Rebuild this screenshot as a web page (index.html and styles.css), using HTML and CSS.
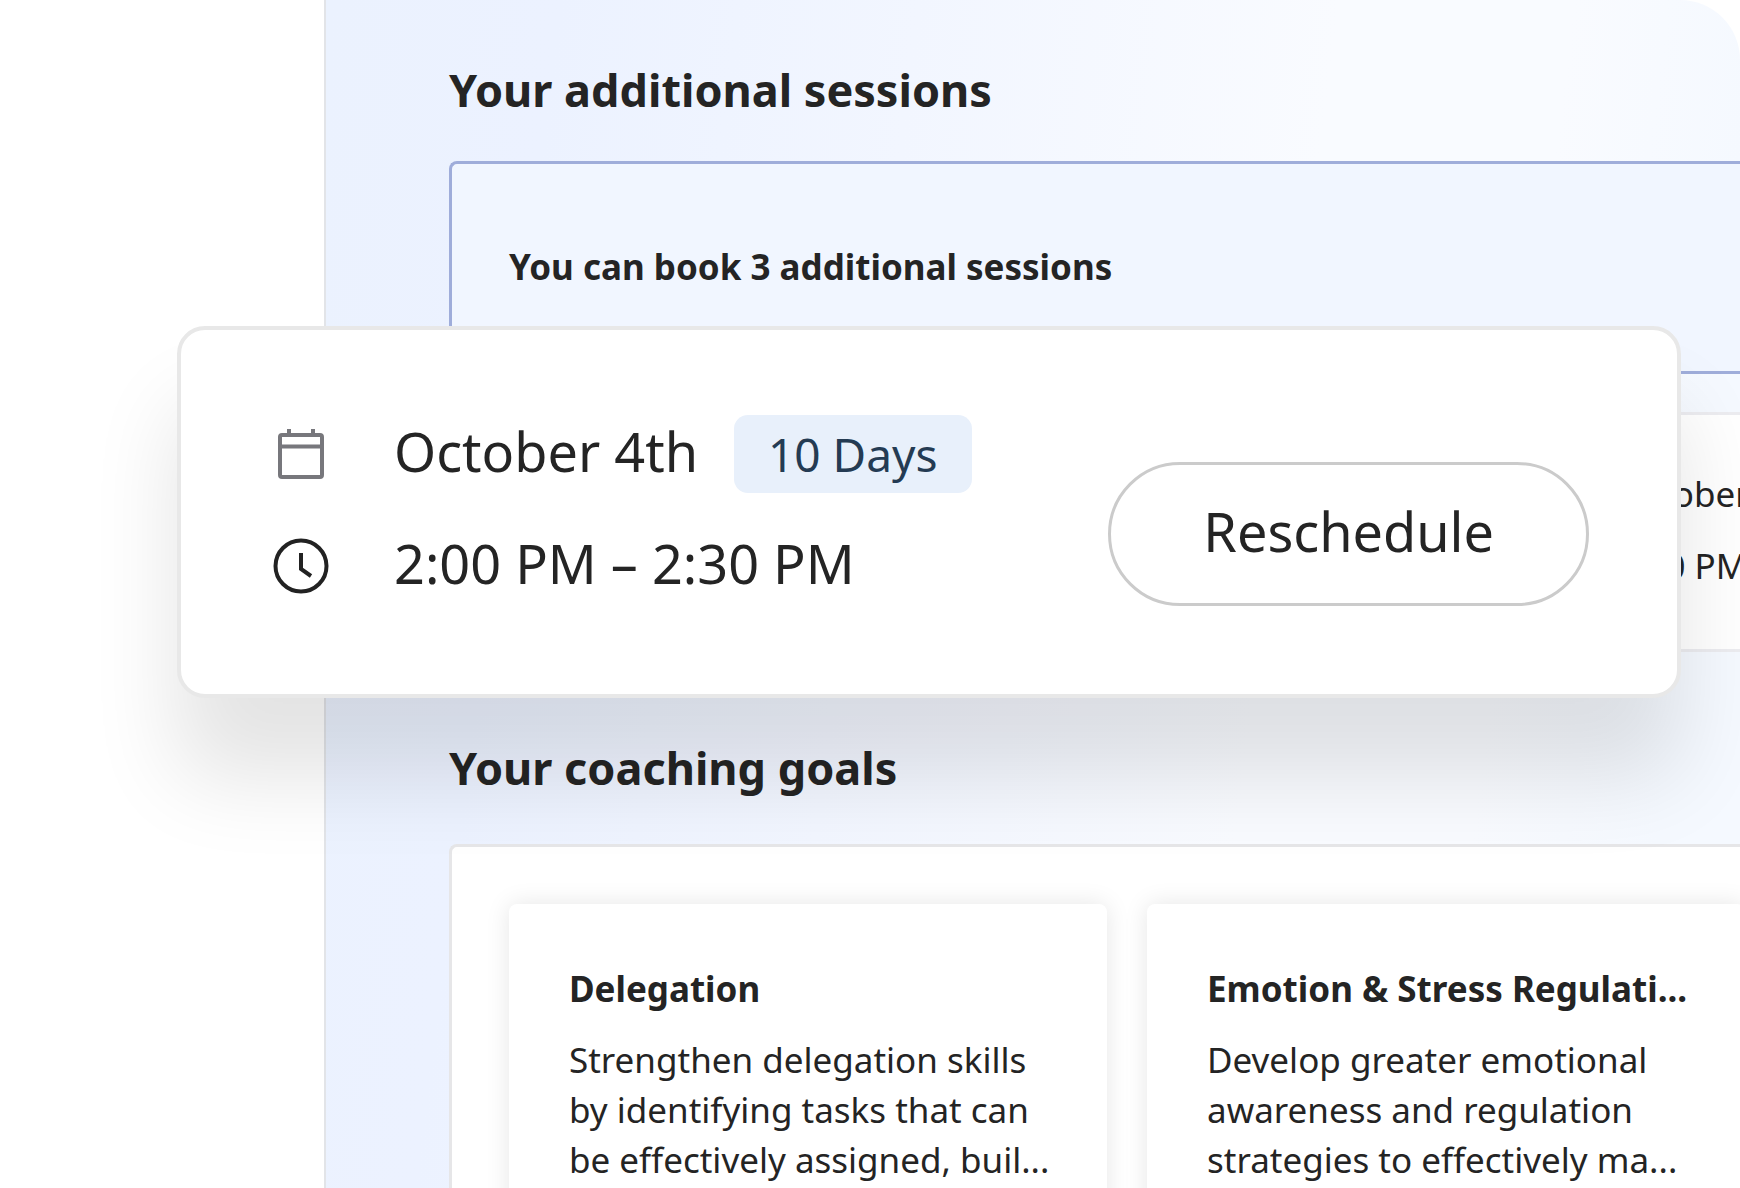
FILE: index.html
```html
<!DOCTYPE html>
<html lang="en">
<head>
<meta charset="utf-8">
<meta name="viewport" content="width=device-width, initial-scale=1">
<title>Coaching sessions</title>
<link rel="stylesheet" href="styles.css">
</head>
<body>
<main class="panel">
  <section class="sessions">
    <h2 class="section-title">Your additional sessions</h2>
    <div class="notice"><p class="notice-text">You can book 3 additional sessions</p></div>
    <div class="session">
      <p class="session-line">October 4th</p>
      <p class="session-line">2:00 PM – 2:30 PM</p>
    </div>
  </section>
  <section class="goals">
    <h2 class="section-title">Your coaching goals</h2>
    <div class="goal-list">
      <article class="goal">
        <h3 class="goal-title">Delegation</h3>
        <p class="goal-text">Strengthen delegation skills<br>by identifying tasks that can<br>be effectively assigned, buil...</p>
      </article>
      <article class="goal">
        <h3 class="goal-title">Emotion &amp; Stress Regulati...</h3>
        <p class="goal-text">Develop greater emotional<br>awareness and regulation<br>strategies to effectively ma...</p>
      </article>
    </div>
  </section>
</main>
<aside class="booking">
  <div class="booking-details">
    <div class="booking-row">
      <svg class="icon" viewBox="0 0 56 56" fill="none" stroke="#77777c" stroke-width="4" aria-hidden="true">
        <rect x="7" y="9" width="42" height="42" rx="2"/>
        <path d="M7 20.500h42M16 3v6M40 3v6"/>
      </svg>
      <span class="booking-text">October 4th</span>
      <span class="badge">10 Days</span>
    </div>
    <div class="booking-row">
      <svg class="icon" viewBox="0 0 56 56" fill="none" stroke="#222" stroke-width="4" aria-hidden="true">
        <circle cx="28" cy="28" r="25.500"/>
        <path d="M28 15v16l10 7"/>
      </svg>
      <span class="booking-text">2:00 PM – 2:30 PM</span>
    </div>
  </div>
  <button class="reschedule" type="button">Reschedule</button>
</aside>
</body>
</html>
```
FILE: styles.css
```css
* {
  box-sizing: border-box;
}

body {
  margin: 0;
  position: relative;
  overflow: hidden;
  background: #fff;
  color: #242424;
  font-family: "Noto Sans", sans-serif;
}

h2,
h3,
p {
  margin: 0;
  white-space: nowrap;
}

.panel {
  height: 100vh;
  margin-left: 324px;
  padding: 58px 0 0 123px;
  border-left: 2px solid #e2e4e8;
  border-top-right-radius: 60px;
  overflow: hidden;
  background: linear-gradient(97deg, #ebf2fe 0%, #ecf2ff 15%, #f2f6ff 38%, #f9fbff 65%, #f9fbff 80%, #f5f9ff 92%);
}

.section-title {
  font-size: 45px;
  line-height: 64px;
}

.notice {
  height: 213px;
  margin-top: 39px;
  padding: 79px 57px;
  border: 3px solid #9fadda;
  border-right: 0;
  border-radius: 8px 0 0 8px;
  background: #f1f6ff;
}

.notice-text {
  font-size: 35px;
  line-height: 48px;
  font-weight: 700;
}

.session {
  display: flex;
  flex-direction: column;
  gap: 24px;
  height: 240px;
  margin-top: 38px;
  padding: 55px 0 0 1164px;
  border: 3px solid #ececf0;
  border-right: 0;
  background: #fff;
}

.session-line {
  font-size: 35px;
  line-height: 48px;
}

.goals {
  margin-top: 84px;
}

.goal-list {
  display: grid;
  grid-template-columns: repeat(2, 598px);
  gap: 40px;
  margin-top: 44px;
  padding: 57px 57px;
  border: 3px solid #e6e6e8;
  border-right: 0;
  border-radius: 8px 0 0 0;
  background: #fff;
}

.goal {
  padding: 61px 60px;
  border-radius: 8px;
  background: #fff;
  box-shadow: 0 0 24px rgba(0, 0, 0, 0.1);
}

.goal-title {
  font-size: 35px;
  line-height: 48px;
}

.goal-text {
  margin-top: 22px;
  font-size: 35px;
  line-height: 50px;
}

.booking {
  position: absolute;
  top: 326px;
  left: 177px;
  right: 59px;
  display: flex;
  align-items: center;
  justify-content: space-between;
  height: 372px;
  padding: 0 88px 0 92px;
  border: 4px solid #e8e8e8;
  border-radius: 28px;
  background: #fff;
  box-shadow: 0 80px 88px rgba(0, 0, 0, 0.11);
}

.booking-details {
  display: flex;
  flex-direction: column;
  gap: 32px;
  padding-bottom: 4px;
}

.booking-row {
  display: flex;
  align-items: center;
  height: 80px;
}

.icon {
  width: 56px;
  height: 56px;
  margin-right: 65px;
}

.booking-text {
  padding-bottom: 6px;
  font-size: 54px;
  line-height: 80px;
}

.badge {
  margin-left: 36px;
  padding: 0 34px;
  border-radius: 14px;
  background: #e8f0fb;
  color: #243b53;
  font-size: 46px;
  line-height: 78px;
}

.reschedule {
  height: 144px;
  margin-top: 44px;
  padding: 0 92px 6px;
  border: 3px solid #cbcbcb;
  border-radius: 72px;
  background: #fff;
  color: #242424;
  font-family: inherit;
  font-size: 54px;
}
```
